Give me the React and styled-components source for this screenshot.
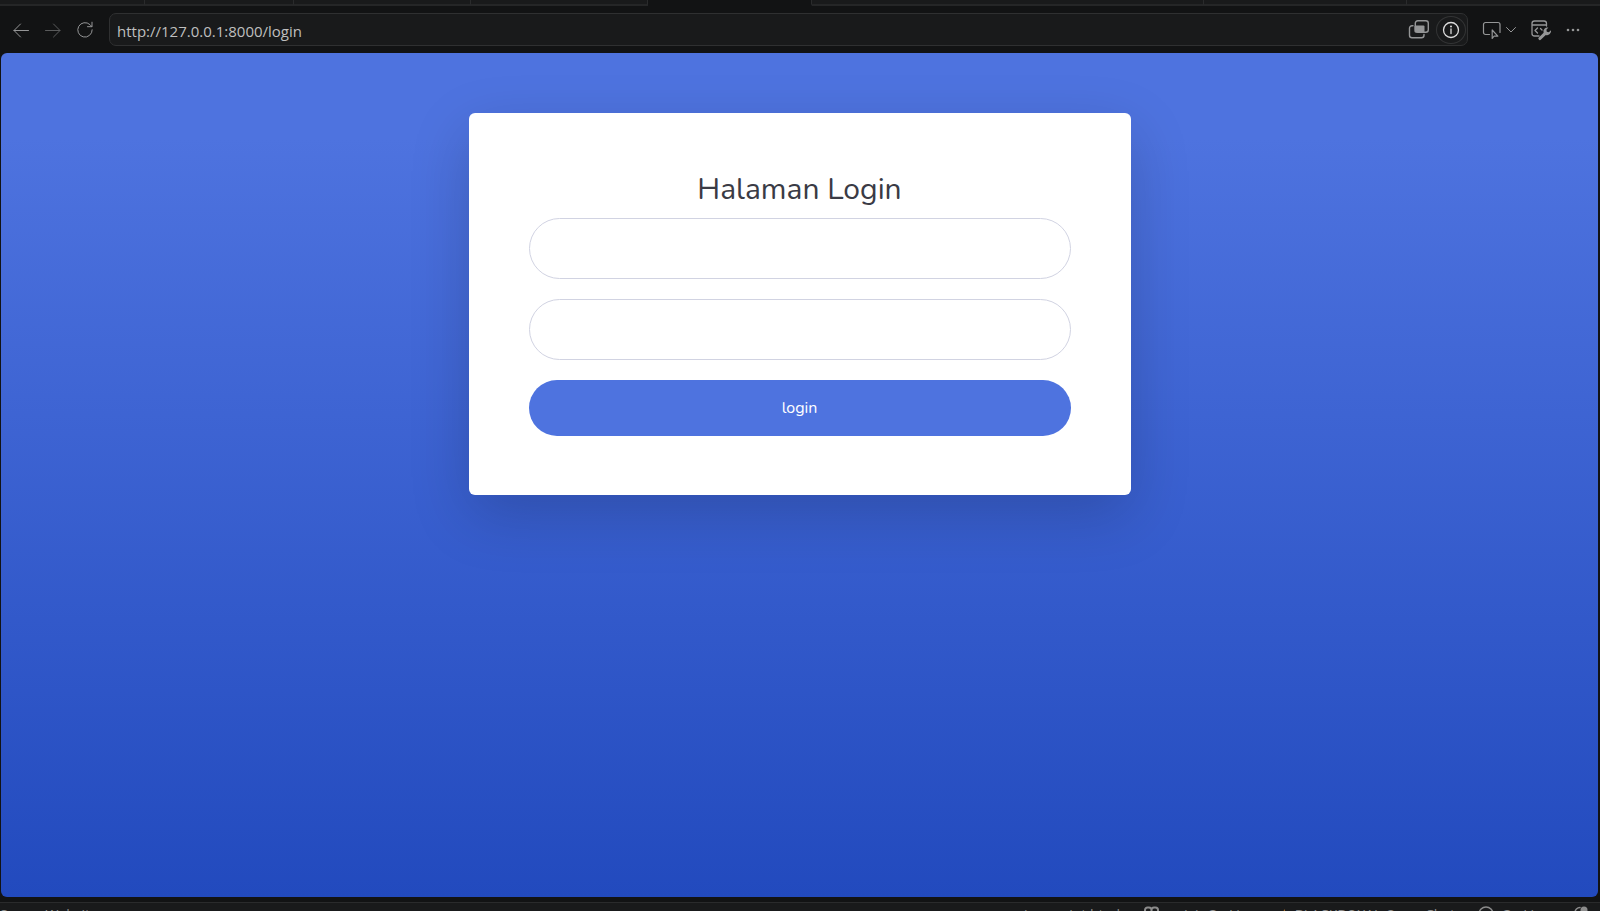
import { useState } from "react"
import styled, { createGlobalStyle, css } from "styled-components"

const TABS = [
    { id: 1, size: 145 },
    { id: 2, size: 148 },
    { id: 3, size: 177 },
    { id: 4, size: 177 },
    { id: 5, size: 164, active: true },
    { id: 6, size: 392 },
    { id: 7, size: 203 },
    { id: 8, size: 194 },
]

const BackIcon = () => (
    <Icon width="20" height="20" viewBox="0 0 20 20">
        <path d="M17.5 10.5H3M9.5 4 3 10.5 9.5 17" />
    </Icon>
)

const ForwardIcon = () => (
    <Icon width="20" height="20" viewBox="0 0 20 20">
        <path d="M2.5 10.5H17M10.5 4 17 10.5 10.5 17" />
    </Icon>
)

const ReloadIcon = () => (
    <Icon width="20" height="20" viewBox="0 0 20 20">
        <path d="M17.2 9.8A7.2 7.2 0 1 1 15 4.7l1.8 1.8M17 2.2v4.5h-4.5" />
    </Icon>
)

const WindowsIcon = () => (
    <Icon width="22" height="22" viewBox="0 0 22 22" strokeWidth="1.4">
        <rect x="7.3" y="1.8" width="13" height="11.5" rx="2.5" />
        <path d="M5 6.8H4A2.5 2.5 0 0 0 1.5 9.3v7A2.5 2.5 0 0 0 4 18.8h9.5a2.5 2.5 0 0 0 2.5-2.5v-.8" />
        <rect x="6.5" y="6.5" width="10" height="7" rx="1" fill="currentColor" stroke="none" />
    </Icon>
)

const InfoIcon = () => (
    <Icon width="18" height="18" viewBox="0 0 18 18" strokeWidth="1.3">
        <circle cx="9" cy="9" r="7.5" />
        <path d="M9 8v4.5" />
        <circle cx="9" cy="5.5" r="1" fill="currentColor" stroke="none" />
    </Icon>
)

const ScreenIcon = () => (
    <Icon width="20" height="20" viewBox="0 0 20 20" strokeWidth="1.2">
        <path d="M7.5 14.5h-4a2 2 0 0 1-2-2v-8a2 2 0 0 1 2-2H16a2 2 0 0 1 2 2v8M10.2 10v8.5l2-2.5 3.6.2z" />
    </Icon>
)

const ChevronIcon = () => (
    <Icon width="12" height="12" viewBox="0 0 12 12">
        <path d="M1.500 3.500 6 8l4.500-4.500" />
    </Icon>
)

const ToolsIcon = () => (
    <Icon width="22" height="22" viewBox="0 0 22 22" strokeWidth="1.3">
        <path d="M9 17H4.5A2.5 2.5 0 0 1 2 14.5v-10A2.5 2.5 0 0 1 4.5 2H14a2.5 2.5 0 0 1 2.500 2.500V7M2 6h14.500M7.500 9 5 11.500 7.500 14M10.500 9.500l1.500 1.500" />
        <path
            d="m8.800 18.400 4.800-4.700a4 4 0 0 1 4.800-5.100l-2 2.200.4 2 2 .4 2.200-2a4 4 0 0 1-5.200 4.700L11 20.600a1.500 1.500 0 0 1-2.200-2.200z"
            fill="currentColor"
            stroke="none"
        />
    </Icon>
)

const MoreIcon = () => (
    <Icon width="16" height="16" viewBox="0 0 16 16">
        <g fill="currentColor" stroke="none">
            <circle cx="3" cy="8" r="1.3" />
            <circle cx="8" cy="8" r="1.3" />
            <circle cx="13" cy="8" r="1.3" />
        </g>
    </Icon>
)

const CopilotIcon = () => (
    <Icon width="17" height="16" viewBox="0 0 17 16" strokeWidth="2">
        <path d="M2 9V4a2.500 2.500 0 0 1 2.500-2.500H6A2.500 2.500 0 0 1 8.500 4v4V4A2.500 2.500 0 0 1 11 1.500h1.500A2.500 2.500 0 0 1 15 4v5" />
        <path d="M2 9v3q6.500 4 13 0V9" />
    </Icon>
)

const BoltIcon = () => (
    <Icon width="10" height="16" viewBox="0 0 10 16">
        <path d="M7 3 2 10h3l-1 5 5-7H6z" fill="#e8912d" stroke="none" />
    </Icon>
)

const CircleIcon = () => (
    <Icon width="16" height="16" viewBox="0 0 16 16" strokeWidth="1.5">
        <circle cx="8" cy="8" r="7" />
    </Icon>
)

const BellIcon = () => (
    <Icon width="16" height="16" viewBox="0 0 16 16" strokeWidth="1.5">
        <path d="M8 1.500A5 5 0 0 0 3 6.500V10l-1.500 2.500h13L13 10" />
        <circle cx="12" cy="4" r="3.500" fill="currentColor" stroke="none" />
    </Icon>
)

const LoginForm = () => {
    const [username, setUsername] = useState("")
    const [password, setPassword] = useState("")

    return (
        <Card onSubmit={(e) => e.preventDefault()}>
            <Title>Halaman Login</Title>
            <Fields>
                <Field
                    type="text"
                    aria-label="Username"
                    value={username}
                    onChange={(e) => setUsername(e.target.value)}
                />
                <Field
                    type="password"
                    aria-label="Password"
                    value={password}
                    onChange={(e) => setPassword(e.target.value)}
                />
                <SubmitButton type="submit">login</SubmitButton>
            </Fields>
        </Card>
    )
}

const App = () => {
    const [url, setUrl] = useState("http://127.0.0.1:8000/login")

    return (
        <Window>
            <GlobalStyle />
            <TabStrip>
                {TABS.map((tab) => (
                    <Tab key={tab.id} $size={tab.size} $active={tab.active} />
                ))}
            </TabStrip>
            <Toolbar>
                <NavButtons>
                    <IconButton aria-label="Back"><BackIcon /></IconButton>
                    <IconButton aria-label="Forward" $dim><ForwardIcon /></IconButton>
                    <IconButton aria-label="Reload"><ReloadIcon /></IconButton>
                </NavButtons>
                <AddressBar>
                    <AddressInput
                        type="text"
                        aria-label="Address"
                        value={url}
                        onChange={(e) => setUrl(e.target.value)}
                    />
                    <IconButton aria-label="Windows"><WindowsIcon /></IconButton>
                    <RoundButton aria-label="Page info"><InfoIcon /></RoundButton>
                </AddressBar>
                <ToolButtons>
                    <ScreenGroup>
                        <IconButton aria-label="Select element"><ScreenIcon /></IconButton>
                        <IconButton aria-label="Select options"><ChevronIcon /></IconButton>
                    </ScreenGroup>
                    <IconButton aria-label="Developer tools"><ToolsIcon /></IconButton>
                    <IconButton aria-label="More"><MoreIcon /></IconButton>
                </ToolButtons>
            </Toolbar>
            <Page>
                <LoginForm />
            </Page>
            <StatusBar>
                <StatusItem>Server Website</StatusItem>
                <StatusGroup>
                    <StatusItem>javascript html</StatusItem>
                    <StatusItem><CopilotIcon /></StatusItem>
                    <StatusItem><span>(o)</span> Go Live</StatusItem>
                    <StatusItem><BoltIcon /> BLACKBOXAI: Open Chat</StatusItem>
                    <StatusItem><CircleIcon /> Go Live</StatusItem>
                    <StatusItem><BellIcon /></StatusItem>
                </StatusGroup>
            </StatusBar>
        </Window>
    )
}

export default App

const GlobalStyle = createGlobalStyle`
    * {
        box-sizing: border-box;
    }

    body {
        margin: 0;
        background-color: #121314;
        font-family: "Open Sans", "Noto Sans", sans-serif;
    }

    button,
    input {
        font-family: inherit;
    }
`

const Window = styled.div`
    display: flex;
    flex-direction: column;
    height: 100vh;
    overflow: hidden;
    background-color: #121314;
`

const TabStrip = styled.div`
    display: flex;
    flex: none;
    height: 6px;
`

const Tab = styled.div`
    flex: ${({ $size }) => $size} 1 0;
    border-right: 1px solid #2a2b2c;
    border-bottom: 2px solid #252627;
    background-color: #191a1b;

    &:last-child {
        border-right: none;
    }

    ${({ $active }) =>
        $active &&
        css`
            border-bottom-color: #121314;
            background-color: #121314;
        `}
`

const Toolbar = styled.div`
    display: flex;
    flex: none;
    align-items: center;
    height: 47px;
    padding: 0 19px 0 11px;
`

const NavButtons = styled.div`
    display: flex;
    gap: 12px;
    margin-right: 14px;
`

const Icon = styled.svg`
    display: block;
    flex: none;
    fill: none;
    stroke: currentColor;
    stroke-linecap: round;
    stroke-linejoin: round;
`

const IconButton = styled.button`
    display: flex;
    flex: none;
    align-items: center;
    justify-content: center;
    padding: 0;
    border: none;
    background: none;
    color: ${({ $dim }) => ($dim ? "#5a5b5c" : "#959697")};
    cursor: pointer;
`

const RoundButton = styled(IconButton)`
    width: 30px;
    height: 28px;
    border: 1px solid #333435;
    border-radius: 50%;
    color: #dcdcdc;
`

const AddressBar = styled.div`
    display: flex;
    flex: 1;
    align-items: center;
    gap: 6px;
    height: 33px;
    padding: 0 1px 0 7px;
    border: 1px solid #2f3031;
    border-radius: 7px;
    background-color: #191a1b;
`

const AddressInput = styled.input`
    flex: 1;
    min-width: 0;
    padding: 2px 0 0;
    border: none;
    outline: none;
    background: none;
    color: #bfbfbf;
    font-size: 15px;
    line-height: 20px;
`

const ToolButtons = styled.div`
    display: flex;
    align-items: center;
    gap: 13px;
    margin-left: 14px;
`

const ScreenGroup = styled.div`
    display: flex;
    align-items: center;
    gap: 3px;
`

const Page = styled.main`
    flex: 1;
    min-height: 0;
    margin: 0 2px 5px 1px;
    padding: 60px 20px;
    border-radius: 6px;
    background-image: linear-gradient(180deg, #4e73df 10%, #224abe 100%);
    font-family: Nunito, Lato, sans-serif;
    overflow: hidden;
`

const Card = styled.form`
    max-width: 662px;
    margin: 0 auto;
    padding: 60px 60px 59px;
    border-radius: 6px;
    background-color: #fff;
    box-shadow: 0 20px 60px rgba(0, 0, 0, 0.175);
`

const Title = styled.h1`
    margin: 0 0 11px;
    color: #3a3b45;
    font-size: 30px;
    font-weight: 400;
    line-height: 34px;
    text-align: center;
`

const Fields = styled.div`
    display: flex;
    flex-direction: column;
    gap: 20px;
`

const Field = styled.input`
    width: 100%;
    height: 61px;
    padding: 0 20px;
    border: 1px solid #d1d3e2;
    border-radius: 200px;
    outline: none;
    color: #6e707e;
    font-size: 16px;
`

const SubmitButton = styled.button`
    height: 56px;
    padding: 0 20px;
    border: none;
    border-radius: 200px;
    background-color: #4e73df;
    color: #fff;
    font-size: 16px;
    line-height: 24px;
    cursor: pointer;
`

const StatusBar = styled.footer`
    display: flex;
    flex: none;
    align-items: flex-start;
    justify-content: space-between;
    height: 9px;
    padding: 3px 12px 0 0;
    border-top: 1px solid #2a2b2c;
    background-color: #191a1b;
    overflow: hidden;
`

const StatusGroup = styled.div`
    display: flex;
    gap: 23px;
`

const StatusItem = styled.span`
    display: flex;
    align-items: flex-start;
    gap: 7px;
    color: #8c8c8c;
    font-size: 14px;
    line-height: 18px;
    white-space: nowrap;
`
